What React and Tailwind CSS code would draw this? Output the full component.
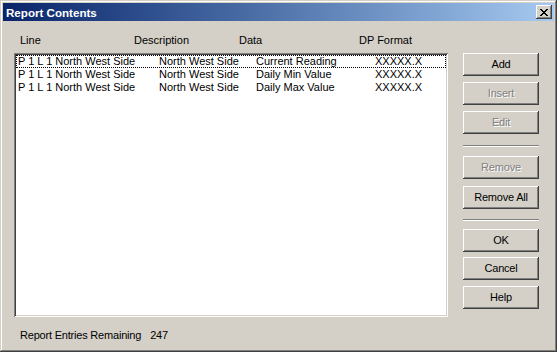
import { Fragment } from "react"

const rows = [
    { line: "P 1 L 1 North West Side", desc: "North West Side", data: "Current Reading", fmt: "XXXXX.X" },
    { line: "P 1 L 1 North West Side", desc: "North West Side", data: "Daily Min Value", fmt: "XXXXX.X" },
    { line: "P 1 L 1 North West Side", desc: "North West Side", data: "Daily Max Value", fmt: "XXXXX.X" },
]

//Classic raised push button
function Button({ label, disabled, className = "" }) {
    return (
        <button
            type="button"
            className={`w-[76px] h-[23px] bg-[#D4D0C8] shadow-[inset_-1px_-1px_#404040,inset_1px_1px_#FFFFFF,inset_-2px_-2px_#808080,inset_2px_2px_#D4D0C8] flex items-center justify-center tracking-[-0.2px] ${disabled ? "text-[#808080] [text-shadow:1px_1px_#FFFFFF]" : "text-black"} ${className}`}
        >
            {label}
        </button>
    )
}

//Etched separator line between button groups
function Separator({ className = "" }) {
    return <div className={`w-[76px] h-[2px] border-t border-t-[#808080] border-b border-b-[#FFFFFF] ${className}`}></div>
}

function App() {
    return (
        <div className="w-[557px] h-[352px] bg-[#D4D0C8] p-[3px] flex flex-col text-[11px] leading-[13px] text-black font-['Liberation_Sans',Arial,sans-serif] shadow-[inset_-1px_-1px_#404040,inset_1px_1px_#D4D0C8,inset_-2px_-2px_#808080,inset_2px_2px_#FFFFFF] select-none">
            {/* title bar */}
            <div className="h-[18px] bg-gradient-to-r from-[#0A246A] to-[#A6CAF0] flex items-center justify-between pl-[3px] pr-[2px]">
                <span className="text-white font-bold text-[11.6px]">Report Contents</span>
                <div className="w-[16px] h-[14px] bg-[#D4D0C8] shadow-[inset_-1px_-1px_#404040,inset_1px_1px_#FFFFFF,inset_-2px_-2px_#808080,inset_2px_2px_#D4D0C8] flex items-center justify-center">
                    <svg width="8" height="7" viewBox="0 0 8 7" shapeRendering="crispEdges">
                        <path d="M0 0h2v1H0zM6 0h2v1H6zM1 1h2v1H1zM5 1h2v1H5zM2 2h4v1H2zM3 3h2v1H3zM2 4h4v1H2zM1 5h2v1H1zM5 5h2v1H5zM0 6h2v1H0zM6 6h2v1H6z" fill="#000" />
                    </svg>
                </div>
            </div>

            {/* column headers */}
            <div className="flex mt-[13px] pl-[17px] h-[13px]">
                <span className="w-[114px]">Line</span>
                <span className="w-[105px]">Description</span>
                <span className="w-[120px]">Data</span>
                <span>DP Format</span>
            </div>

            <div className="flex items-start mt-[6px] pl-[11px]">
                {/* list box */}
                <div className="w-[434px] h-[264px] bg-white p-[2px] shadow-[inset_1px_1px_#808080,inset_-1px_-1px_#FFFFFF,inset_2px_2px_#404040,inset_-2px_-2px_#D4D0C8]">
                    {rows.map((row, i) => (
                        <div key={i} className={`flex h-[13px] items-center pl-[2px] whitespace-nowrap ${i === 0 ? "outline outline-1 outline-dotted outline-black -outline-offset-1" : ""}`}>
                            <span className="w-[141px]">{row.line}</span>
                            <span className="w-[97px]">{row.desc}</span>
                            <span className="w-[119px]">{row.data}</span>
                            <span>{row.fmt}</span>
                        </div>
                    ))}
                </div>

                {/* buttons */}
                <div className="flex flex-col ml-[15px]">
                    <Button label="Add" />
                    <Button label="Insert" disabled className="mt-[6px]" />
                    <Button label="Edit" disabled className="mt-[6px]" />
                    <Separator className="mt-[11px]" />
                    <Button label="Remove" disabled className="mt-[9px]" />
                    <Button label="Remove All" className="mt-[7px]" />
                    <Separator className="mt-[10px]" />
                    <Button label="OK" className="mt-[8px]" />
                    <Button label="Cancel" className="mt-[5px]" />
                    <Button label="Help" className="mt-[6px]" />
                </div>
            </div>

            {/* status */}
            <div className="flex mt-[12px] pl-[17px] tracking-[-0.2px]">
                <span>Report Entries Remaining</span>
                <span className="ml-[9px]">247</span>
            </div>
        </div>
    )
}
export default App
